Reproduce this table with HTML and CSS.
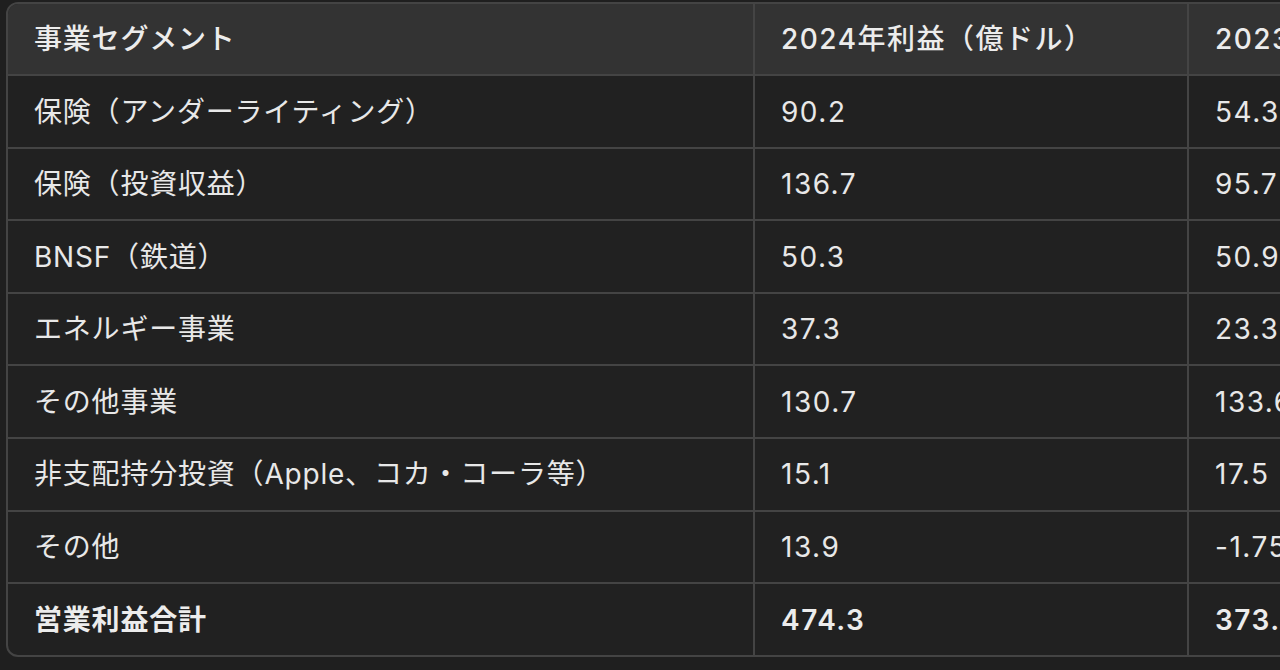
FILE: index.html
```html
<!DOCTYPE html>
<html lang="ja">
<head>
<meta charset="utf-8">
<title>事業セグメント</title>
<link rel="stylesheet" href="styles.css">
</head>
<body>
<div class="frame">
  <table class="tbl">
    <colgroup>
      <col class="c1"><col class="c2"><col class="c3">
    </colgroup>
    <thead>
      <tr><th>事業セグメント</th><th class="num">2024年利益（億ドル）</th><th class="num">2023年利益（億ドル）</th></tr>
    </thead>
    <tbody>
      <tr><td>保険（アンダーライティング）</td><td class="num">90.2</td><td class="num">54.3</td></tr>
      <tr><td>保険（投資収益）</td><td class="num">136.7</td><td class="num">95.7</td></tr>
      <tr><td>BNSF（鉄道）</td><td class="num">50.3</td><td class="num">50.9</td></tr>
      <tr><td>エネルギー事業</td><td class="num">37.3</td><td class="num">23.3</td></tr>
      <tr><td>その他事業</td><td class="num">130.7</td><td class="num">133.6</td></tr>
      <tr><td>非支配持分投資（Apple、コカ・コーラ等）</td><td class="num">15.1</td><td class="num">17.5</td></tr>
      <tr><td>その他</td><td class="num">13.9</td><td class="num">-1.75</td></tr>
      <tr class="total"><td>営業利益合計</td><td class="num">474.3</td><td class="num">373.5</td></tr>
    </tbody>
  </table>
</div>
</body>
</html>
```
FILE: styles.css
```css
html, body {
  margin: 0;
  padding: 0;
  background: #1f1f1f;
  overflow: hidden;
  height: 670px;
}
body {
  font-family: "Inter", "Noto Sans CJK JP", sans-serif;
  color: #ececec;
  font-size: 28px;
}
.frame {
  margin: 2px 0 0 6px;
  width: max-content;
  border: 2px solid #444444;
  border-radius: 12px;
  overflow: hidden;
  background: #212121;
}
.tbl {
  border-collapse: separate;
  border-spacing: 0;
  table-layout: fixed;
}
.c1 { width: 745px; }
.c2 { width: 434px; }
.c3 { width: 434px; }
.tbl th, .tbl td {
  height: 72.6px;
  box-sizing: border-box;
  padding: 2px 26px 0;
  text-align: left;
  vertical-align: middle;
  white-space: nowrap;
  border-bottom: 2px solid #444444;
  line-height: 1.2;
  letter-spacing: 0.8px;
}
.tbl .num {
  letter-spacing: 1.5px;
}
.tbl th + th, .tbl td + td {
  border-left: 2px solid #444444;
}
.tbl th {
  background: #333333;
  font-weight: 500;
  height: 72px;
}
.tbl td {
  font-weight: 400;
  color: #e8e8e8;
}
.tbl tbody tr:last-child td {
  border-bottom: none;
  height: 70.6px;
}
.tbl .total td {
  font-weight: 600;
  color: #ececec;
}
```
